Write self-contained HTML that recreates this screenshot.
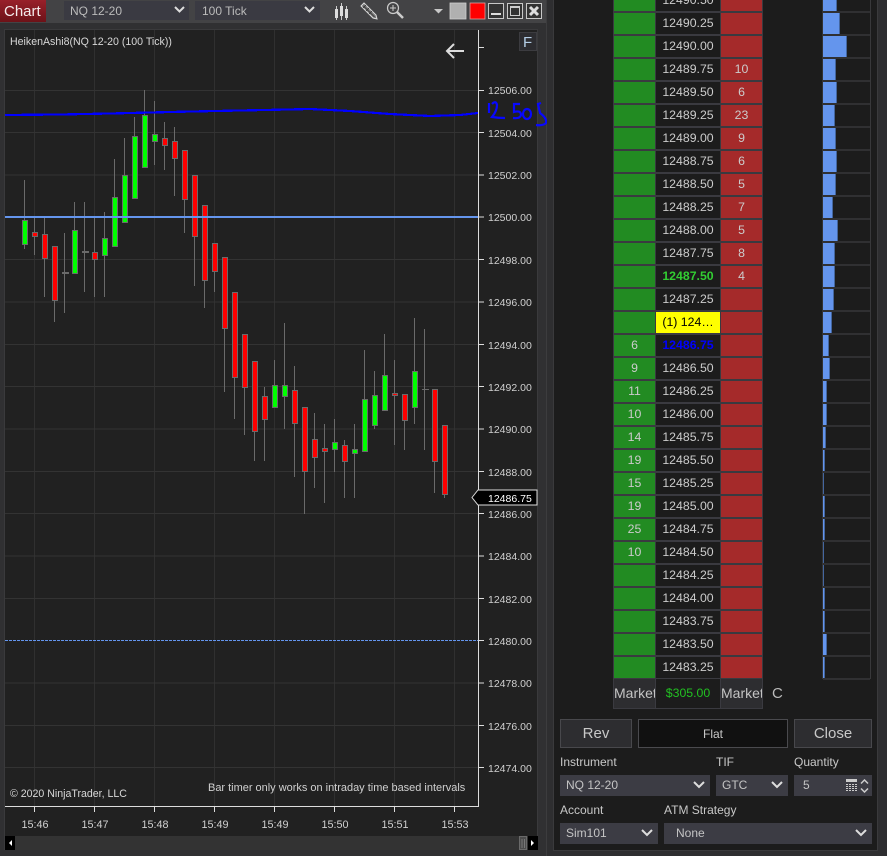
<!DOCTYPE html>
<html><head><meta charset="utf-8">
<style>
html,body{margin:0;padding:0;width:887px;height:856px;overflow:hidden;background:#2e2e30;font-family:"Liberation Sans",sans-serif;color:#ccc}
.a{position:absolute}
.combo{position:absolute;background:#3c3c44;color:#c4c4c4;font-size:12px;line-height:21px;box-sizing:border-box;padding-left:6px}
.combo svg{position:absolute;top:6px;right:5px}
.lbl{position:absolute;font-size:12px;color:#c8c8c8;line-height:14px}
.btn{position:absolute;box-sizing:border-box;background:#2d2d30;border:1px solid #48484c;color:#c8c8c8;font-size:15px;text-align:center;line-height:28px}
#dom{position:absolute;left:613px;top:-10px;width:150px;background:#3a3a40}
#dom div{height:23px;display:flex;padding:0 1px;box-sizing:border-box;font-size:12.3px;line-height:21px;text-align:center;color:#ccc}
#dom i{font-style:normal;display:block;height:21px}
#dom i:nth-child(1){width:41px;background:#228b22;margin-right:1px}
#dom i:nth-child(2){width:64px;background:#1c1c1c;margin-right:1px}
#dom i:nth-child(3){width:41px;background:#a52a2a}
#vol{position:absolute;left:822px;top:-10px;width:49px;height:689px;box-sizing:border-box;border-left:1px solid #333;border-right:1px solid #38383a}
#vol div{height:23px;box-sizing:border-box;border-bottom:2px solid #303032}
#vol i{display:block;height:21px;background:#6495ed;border-right:1px solid #44669f;box-sizing:border-box}
</style></head><body>

<svg class="a" style="left:0;top:0" width="547" height="856" font-family="'Liberation Sans',sans-serif">
<rect width="547" height="856" fill="#303032"/>
<rect width="547" height="23" fill="#434345"/>
<rect x="4" y="29" width="534" height="821" fill="#3a3a3c"/>
<rect x="5" y="30" width="532" height="819" fill="#212121"/>
<line x1="546.5" y1="0" x2="546.5" y2="856" stroke="#3c3c3e"/>
<defs><linearGradient id="rg" x1="0" y1="0" x2="0" y2="1"><stop offset="0" stop-color="#98202a"/><stop offset="1" stop-color="#6d1218"/></linearGradient></defs>
<rect width="46" height="22" fill="url(#rg)"/>
<text x="4" y="16" font-size="15" fill="#f4ecec">Chart</text>
<rect x="64" y="1" width="125" height="19" fill="#3a3a42"/>
<text x="70" y="15" font-size="12" fill="#bbb">NQ 12-20</text>
<path d="M175 7l4.500 4.500 4.500-4.500" fill="none" stroke="#ddd" stroke-width="2"/>
<rect x="195" y="1" width="125" height="19" fill="#3a3a42"/>
<text x="202" y="15" font-size="12" fill="#bbb">100 Tick</text>
<path d="M305 7l4.500 4.500 4.500-4.500" fill="none" stroke="#ddd" stroke-width="2"/>
<!-- candle icon -->
<path d="M336.500 6v14M341.500 3v17M346.500 6v14" stroke="#ccc" stroke-width="1"/>
<rect x="335" y="9" width="3" height="9" fill="#ddd"/><rect x="340" y="6" width="3" height="10" fill="#ddd"/><rect x="345" y="9" width="3" height="9" fill="#ddd"/>
<!-- pencil icon -->
<path d="M361 6l3-3 12 12 1 4-4-1z" fill="#777" stroke="#ddd" stroke-width="1"/><path d="M363.500 6l11 11M366 5l-3 3M369 8l-3 3M372 11l-3 3" stroke="#333" stroke-width="0.800"/>
<!-- magnifier -->
<circle cx="393" cy="8" r="5.500" fill="none" stroke="#ccc" stroke-width="1.200"/><path d="M390 8h6M393 5v6" stroke="#ccc" stroke-width="1"/><path d="M397 12l6 6" stroke="#ccc" stroke-width="2.500"/>
<path d="M434 9h9l-4.500 4.500z" fill="#c8c8c8"/>
<rect x="450" y="3" width="16" height="16" fill="#b0b0b0" stroke="#cfcfcf" stroke-width="0.800"/>
<rect x="470" y="3" width="15" height="16" fill="#f00" stroke="#d8a0a0" stroke-width="0.800"/>
<rect x="488.500" y="3.500" width="15" height="15" fill="#333" stroke="#c8c8c8"/><rect x="491" y="13" width="10" height="2" fill="#ddd"/>
<rect x="507.500" y="3.500" width="15" height="15" fill="#333" stroke="#c8c8c8"/><rect x="510.500" y="6.500" width="9" height="9" fill="none" stroke="#ccc"/><rect x="510" y="6" width="10" height="2" fill="#ccc"/>
<rect x="526.500" y="3.500" width="15" height="15" fill="#333" stroke="#c8c8c8"/><path d="M530 7l8 8M538 7l-8 8" stroke="#ddd" stroke-width="3"/>

<!-- grid -->
<path d="M34.500 30V806M94.500 30V806M154.500 30V806M214.500 30V806M274.500 30V806M334.500 30V806M394.500 30V806M454.500 30V806" stroke="#303030"/>
<path d="M5 90.500H478M5 132.500H478M5 175H478M5 259.500H478M5 302H478M5 344.500H478M5 386.500H478M5 429H478M5 471.500H478M5 513.500H478M5 556H478M5 598.500H478M5 683H478M5 725.500H478M5 767.500H478" stroke="#333"/>

<!-- wicks -->
<path stroke="#6a6a6a" fill="none" d="M24.500 180V249M34.500 217V255M44.500 217V297M54.500 246V322M64.500 233V313M74.500 202V273M84.500 202V292M94.500 217V297M104.500 212V297M114.500 159V246M124.500 138V222M134.500 117V198M144.500 90V167M154.500 101V165M164.500 122V170M174.500 127V196M184.500 150V233M194.500 175V286M204.500 205V308M214.500 243V292M224.500 257V392M234.500 292V419M244.500 334V435M254.500 361V461M264.500 387V461M274.500 360V407M284.500 323V429M294.500 366V477M304.500 407V514M314.500 413V488M324.500 424V503M334.500 419V472M344.500 440V498M354.500 424V498M364.500 350V451M374.500 371V429M384.500 334V410M394.500 360V445M404.500 394V450M414.500 318V424M424.500 329V450M434.500 389V493M444.500 425V498"/>
<path stroke="#6a6a6a" stroke-width="2" d="M62 273h7M82 252h7"/>
<path stroke="#6a6a6a" d="M422 389.500h7"/>
<!-- green bodies -->
<g fill="#00ff00" stroke="#6a6a6a">
<rect x="22.500" y="220.500" width="5" height="24"/><rect x="72.500" y="230.500" width="5" height="43"/><rect x="102.500" y="238.500" width="5" height="17"/><rect x="112.500" y="197.500" width="5" height="49"/><rect x="122.500" y="175.500" width="5" height="47"/><rect x="132.500" y="136.500" width="5" height="62"/><rect x="142.500" y="115.500" width="5" height="52"/><rect x="152.500" y="134.500" width="5" height="7"/><rect x="272.500" y="385.500" width="5" height="22"/><rect x="282.500" y="385.500" width="5" height="11"/><rect x="332.500" y="442.500" width="5" height="7"/><rect x="352.500" y="449.500" width="5" height="4"/><rect x="362.500" y="399.500" width="5" height="52"/><rect x="372.500" y="395.500" width="5" height="30"/><rect x="382.500" y="375.500" width="5" height="35"/><rect x="412.500" y="371.500" width="5" height="36"/>
</g>
<!-- red bodies -->
<g fill="#ff0000" stroke="#6a6a6a">
<rect x="32.500" y="232.500" width="5" height="4"/><rect x="42.500" y="234.500" width="5" height="24"/><rect x="52.500" y="246.500" width="5" height="54"/><rect x="92.500" y="252.500" width="5" height="7"/><rect x="162.500" y="138.500" width="5" height="7"/><rect x="172.500" y="141.500" width="5" height="17"/><rect x="182.500" y="150.500" width="5" height="49"/><rect x="192.500" y="175.500" width="5" height="61"/><rect x="202.500" y="205.500" width="5" height="75"/><rect x="212.500" y="243.500" width="5" height="28"/><rect x="222.500" y="257.500" width="5" height="71"/><rect x="232.500" y="292.500" width="5" height="85"/><rect x="242.500" y="334.500" width="5" height="53"/><rect x="252.500" y="361.500" width="5" height="70"/><rect x="262.500" y="396.500" width="5" height="23"/><rect x="292.500" y="390.500" width="5" height="33"/><rect x="302.500" y="407.500" width="5" height="64"/><rect x="312.500" y="439.500" width="5" height="18"/><rect x="322.500" y="448.500" width="5" height="3"/><rect x="342.500" y="445.500" width="5" height="16"/><rect x="392.500" y="393.500" width="5" height="2"/><rect x="402.500" y="394.500" width="5" height="26"/><rect x="432.500" y="389.500" width="5" height="72"/><rect x="442.500" y="425.500" width="5" height="69"/>
</g>

<!-- lines -->
<path d="M5 115L60 114.500 110 113.500 170 112 215 111 265 110 310 109 350 111 390 114 430 116 460 115 478 113" fill="none" stroke="#0000ff" stroke-width="2.200" shape-rendering="crispEdges"/>
<rect x="5" y="216" width="473" height="2" fill="#6495ed"/>
<line x1="5" y1="640.500" x2="478" y2="640.500" stroke="#6495ed" stroke-dasharray="3 1"/>

<!-- handwriting -->
<g fill="none" stroke="#0808ff" stroke-width="2.200">
<path d="M489 103V113"/>
<path d="M492 104Q496 100 497 105Q497 111 492 117Q498 118 505 118"/>
<path d="M520 104L514 104 514 112Q521 110 521 115Q520 119 513 118"/>
<ellipse cx="527" cy="114" rx="4" ry="5"/>
<path d="M541 103L538 104 540 113Q547 118 546 123Q543 126 536 125"/>
</g>

<!-- axes -->
<path d="M478.500 30V806.500H5" fill="none" stroke="#ddd" stroke-width="1"/>
<path stroke="#ddd" d="M478 47.500h6M478 90.500h6M478 132.500h6M478 175h6M478 217h6M478 259.500h6M478 302h6M478 344.500h6M478 386.500h6M478 429h6M478 471.500h6M478 513.500h6M478 556h6M478 598.500h6M478 640.500h6M478 683h6M478 725.500h6M478 767.500h6M34.500 806v6M94.500 806v6M154.500 806v6M214.500 806v6M274.500 806v6M334.500 806v6M394.500 806v6M454.500 806v6"/>
<g font-size="10.500" fill="#d0d0d0">
<text x="488" y="94">12506.00</text><text x="488" y="137">12504.00</text><text x="488" y="179">12502.00</text><text x="488" y="221">12500.00</text><text x="488" y="264">12498.00</text><text x="488" y="306">12496.00</text><text x="488" y="349">12494.00</text><text x="488" y="391">12492.00</text><text x="488" y="433">12490.00</text><text x="488" y="476">12488.00</text><text x="488" y="518">12486.00</text><text x="488" y="560">12484.00</text><text x="488" y="603">12482.00</text><text x="488" y="645">12480.00</text><text x="488" y="687">12478.00</text><text x="488" y="730">12476.00</text><text x="488" y="772">12474.00</text>
</g>
<path d="M472 497.500L478 490H537V505H478z" fill="#000" stroke="#ddd"/>
<text x="488" y="502" font-size="10.500" fill="#fff">12486.75</text>
<g font-size="10.800" fill="#d0d0d0" text-anchor="middle">
<text x="35" y="828">15:46</text><text x="95" y="828">15:47</text><text x="155" y="828">15:48</text><text x="215" y="828">15:49</text><text x="275" y="828">15:49</text><text x="335" y="828">15:50</text><text x="395" y="828">15:51</text><text x="455" y="828">15:53</text>
</g>
<text x="10" y="45" font-size="10.600" fill="#d8d8d8">HeikenAshi8(NQ 12-20 (100 Tick))</text>
<text x="10" y="797" font-size="10.600" fill="#d8d8d8">© 2020 NinjaTrader, LLC</text>
<text x="208" y="791" font-size="10.980" fill="#d0d0d0">Bar timer only works on intraday time based intervals</text>
<!-- F -->
<rect x="519.500" y="32.500" width="17" height="18" fill="#2c2c30" stroke="#3c3c40"/>
<text x="523" y="47" font-size="15" fill="#b4cee6">F</text>
<!-- arrow -->
<path d="M464 51H447M454 44l-7 7 7 7" fill="none" stroke="#ddd" stroke-width="2"/>
<!-- scrollbar -->
<rect x="5" y="836" width="533" height="14" fill="#333"/>
<rect x="5" y="836" width="10" height="14" fill="#000"/><path d="M12 840v6l-3-3z" fill="#fff"/>
<rect x="528" y="836" width="10" height="14" fill="#000"/><path d="M531 840v6l3-3z" fill="#fff"/>
<rect x="519.500" y="836.500" width="7" height="13" fill="#4c4c4c" stroke="#6a6a6a"/><path d="M522 839v9M524.500 839v9" stroke="#777"/>
</svg>

<!-- right window -->
<div class="a" style="left:547px;top:0;width:340px;height:856px;background:#2e2e30"></div>
<div class="a" style="left:553px;top:0;width:325px;height:851px;background:#1c1c1c;border-left:1px solid #3a3a3c;border-right:1px solid #3a3a3c;border-bottom:1px solid #3a3a3c;box-sizing:border-box"></div>

<div id="dom">
<div><i></i><i>12490.50</i><i></i></div>
<div><i></i><i>12490.25</i><i></i></div>
<div><i></i><i>12490.00</i><i></i></div>
<div><i></i><i>12489.75</i><i>10</i></div>
<div><i></i><i>12489.50</i><i>6</i></div>
<div><i></i><i>12489.25</i><i>23</i></div>
<div><i></i><i>12489.00</i><i>9</i></div>
<div><i></i><i>12488.75</i><i>6</i></div>
<div><i></i><i>12488.50</i><i>5</i></div>
<div><i></i><i>12488.25</i><i>7</i></div>
<div><i></i><i>12488.00</i><i>5</i></div>
<div><i></i><i>12487.75</i><i>8</i></div>
<div><i></i><i style="color:#32cd32;font-weight:bold">12487.50</i><i>4</i></div>
<div><i></i><i>12487.25</i><i></i></div>
<div><i></i><i style="background:#ff0;color:#000">(1) 124…</i><i></i></div>
<div><i>6</i><i style="color:#0000ff;font-weight:bold">12486.75</i><i></i></div>
<div><i>9</i><i>12486.50</i><i></i></div>
<div><i>11</i><i>12486.25</i><i></i></div>
<div><i>10</i><i>12486.00</i><i></i></div>
<div><i>14</i><i>12485.75</i><i></i></div>
<div><i>19</i><i>12485.50</i><i></i></div>
<div><i>15</i><i>12485.25</i><i></i></div>
<div><i>19</i><i>12485.00</i><i></i></div>
<div><i>25</i><i>12484.75</i><i></i></div>
<div><i>10</i><i>12484.50</i><i></i></div>
<div><i></i><i>12484.25</i><i></i></div>
<div><i></i><i>12484.00</i><i></i></div>
<div><i></i><i>12483.75</i><i></i></div>
<div><i></i><i>12483.50</i><i></i></div>
<div><i></i><i>12483.25</i><i></i></div>
</div>

<!-- market row -->
<div class="a" style="left:613px;top:679px;width:150px;height:30px;background:#3a3a40;box-sizing:border-box;padding:0 1px 1px;display:flex;font-size:14px;line-height:29px">
<span style="width:41px;background:#2d2d30;margin-right:1px;overflow:hidden;white-space:nowrap;color:#c4c4c4">Market</span>
<span style="width:64px;background:#1c1c1c;margin-right:1px;color:#22c022;font-size:12.300px;text-align:center">$305.00</span>
<span style="width:41px;background:#2d2d30;overflow:hidden;white-space:nowrap;color:#c4c4c4">Market</span>
</div>
<div class="a" style="left:772px;top:685px;font-size:15px;color:#bbb;line-height:18px">C</div>

<div id="vol">
<div><i style="width:14px"></i></div><div><i style="width:17px"></i></div><div><i style="width:24px"></i></div><div><i style="width:13px"></i></div><div><i style="width:14px"></i></div><div><i style="width:12px"></i></div><div><i style="width:13px"></i></div><div><i style="width:14px"></i></div><div><i style="width:13px"></i></div><div><i style="width:10px"></i></div><div><i style="width:15px"></i></div><div><i style="width:12px"></i></div><div><i style="width:12px"></i></div><div><i style="width:11px"></i></div><div><i style="width:9px"></i></div><div><i style="width:6px"></i></div><div><i style="width:7px"></i></div><div><i style="width:4px"></i></div><div><i style="width:4px"></i></div><div><i style="width:3px"></i></div><div><i style="width:2px"></i></div><div><i style="width:1px"></i></div><div><i style="width:2px"></i></div><div><i style="width:2px"></i></div><div><i style="width:1px"></i></div><div><i style="width:1px"></i></div><div><i style="width:2px"></i></div><div><i style="width:2px"></i></div><div><i style="width:4px"></i></div><div><i style="width:2px"></i></div>
</div>

<!-- order entry -->
<div class="btn" style="left:560px;top:719px;width:72px;height:29px">Rev</div>
<div class="btn" style="left:638px;top:719px;width:150px;height:29px;background:#111;font-size:12px;border-color:#4a4a4e">Flat</div>
<div class="btn" style="left:794px;top:719px;width:78px;height:29px">Close</div>
<div class="lbl" style="left:560px;top:755px">Instrument</div>
<div class="lbl" style="left:716px;top:755px">TIF</div>
<div class="lbl" style="left:794px;top:755px">Quantity</div>
<div class="combo" style="left:560px;top:775px;width:150px;height:21px">NQ 12-20<svg width="12" height="9"><path d="M1 1l5 5 5-5" fill="none" stroke="#ddd" stroke-width="2"/></svg></div>
<div class="combo" style="left:716px;top:775px;width:72px;height:21px">GTC<svg width="12" height="9"><path d="M1 1l5 5 5-5" fill="none" stroke="#ddd" stroke-width="2"/></svg></div>
<div class="combo" style="left:794px;top:775px;width:78px;height:21px;padding-left:9px">5
<svg style="top:4px;right:15px" width="11" height="13"><rect width="11" height="3" fill="#ccc"/><path d="M0 5h2M3 5h2M6 5h2M9 5h2M0 7h2M3 7h2M6 7h2M9 7h2M0 9h2M3 9h2M6 9h2M9 9h2M0 11h2M3 11h2M6 11h2M9 11h2" stroke="#ccc" stroke-width="1" fill="none" transform="translate(0,.5)"/></svg>
<svg style="top:4px;right:3px" width="9" height="14"><path d="M1 4.500l3.500-3.500 3.500 3.500M1 9.500l3.500 3.500 3.500-3.500" fill="none" stroke="#ccc" stroke-width="1.500"/></svg></div>
<div class="lbl" style="left:560px;top:803px">Account</div>
<div class="lbl" style="left:664px;top:803px">ATM Strategy</div>
<div class="combo" style="left:560px;top:823px;width:98px;height:21px">Sim101<svg width="12" height="9"><path d="M1 1l5 5 5-5" fill="none" stroke="#ddd" stroke-width="2"/></svg></div>
<div class="combo" style="left:664px;top:823px;width:208px;height:21px;padding-left:12px">None<svg width="12" height="9"><path d="M1 1l5 5 5-5" fill="none" stroke="#ddd" stroke-width="2"/></svg></div>
</body></html>
